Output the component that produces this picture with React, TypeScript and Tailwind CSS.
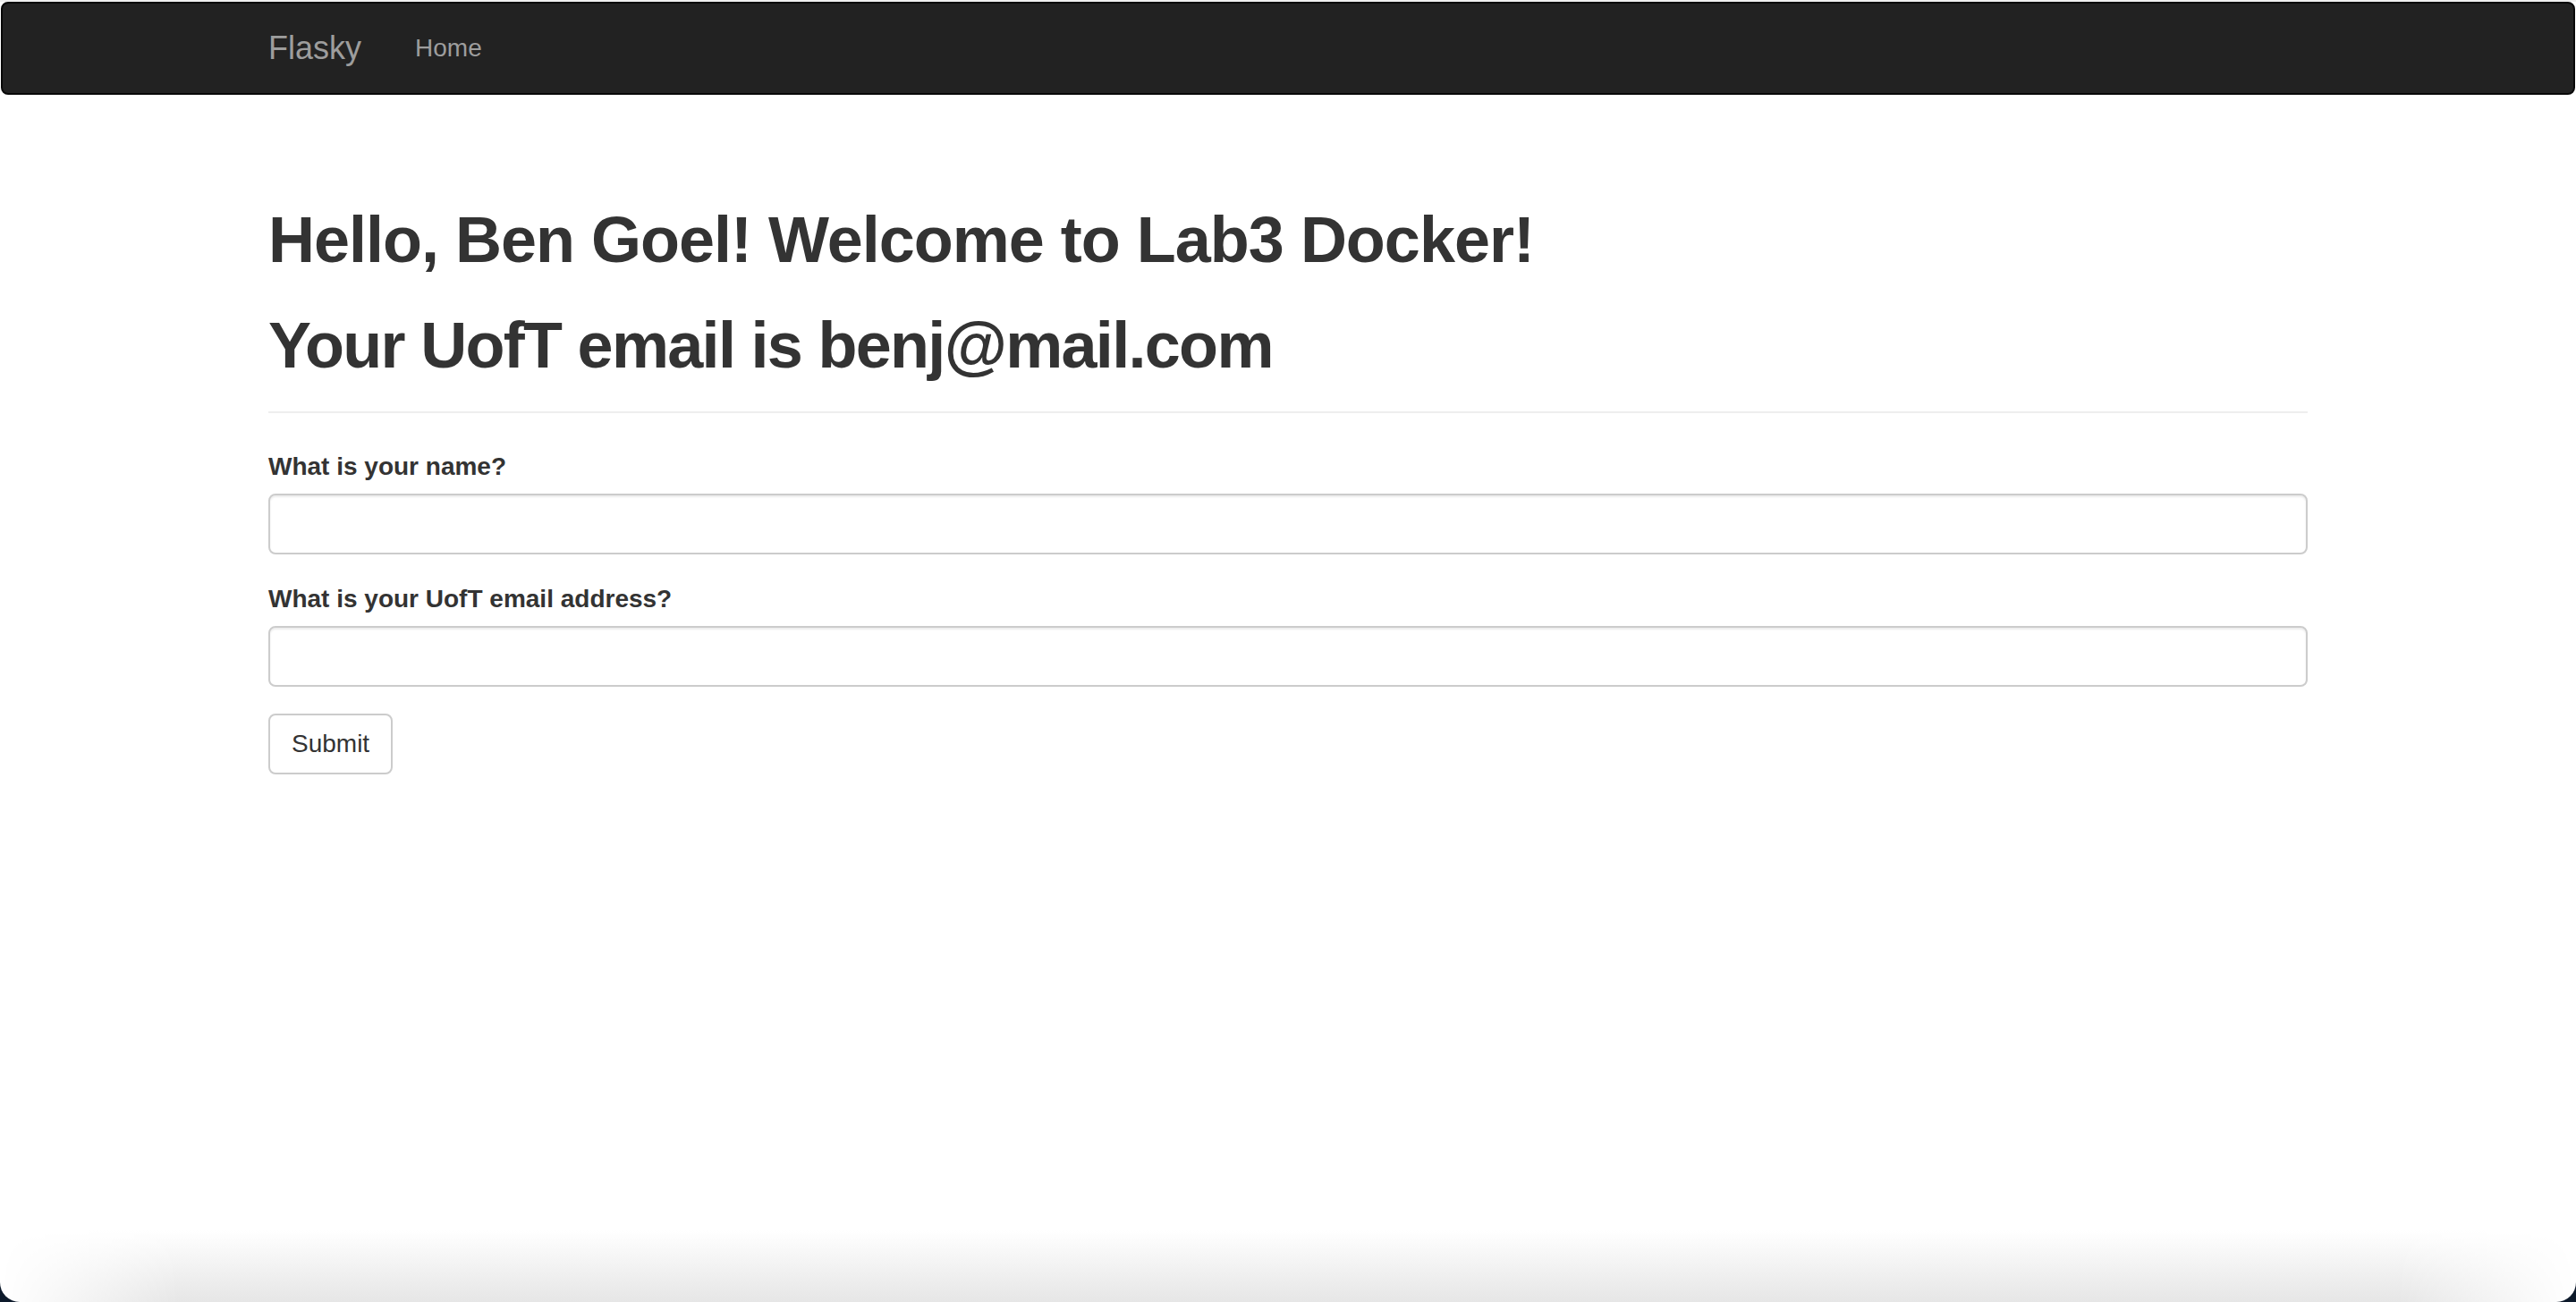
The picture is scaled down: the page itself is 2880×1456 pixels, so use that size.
import { useState } from "react";

const font = "font-['Liberation_Sans',Arial,sans-serif]";

function Navbar() {
  return (
    <div className="mx-px h-[104px] rounded-[8px] border-2 border-[#080808] bg-[#222]">
      <div className="mx-auto flex w-[2340px] px-[30px]">
        <a className="-ml-[30px] px-[30px] py-[30px] text-[36px] leading-[40px] text-[#9d9d9d]">
          Flasky
        </a>
        <ul className="flex">
          <li>
            <a className="block px-[30px] py-[30px] text-[28px] leading-[40px] text-[#9d9d9d]">
              Home
            </a>
          </li>
        </ul>
      </div>
    </div>
  );
}

function Field({ label, value, onChange }: { label: string; value: string; onChange: (v: string) => void }) {
  return (
    <div className="mb-[30px]">
      <label className="mb-[10px] block text-[28px] font-bold leading-[40px] text-[#333]">{label}</label>
      <input
        value={value}
        onChange={(e) => onChange(e.target.value)}
        className="block h-[68px] w-full rounded-[8px] border-2 border-[#ccc] bg-white px-[24px] text-[28px] text-[#555] shadow-[inset_0_2px_2px_rgba(0,0,0,0.075)] outline-none"
      />
    </div>
  );
}

export default function App() {
  const [name, setName] = useState("");
  const [email, setEmail] = useState("");

  return (
    <div className={`h-[1456px] bg-[#0d1a2b] ${font}`}>
      <div className="flex h-full flex-col overflow-hidden rounded-b-[22px] bg-white">
        <div className="h-[2px] bg-[#efefef]" />
        <Navbar />

        <div className="mx-auto w-[2340px] flex-1 px-[30px]">
          <div className="mt-[122px] border-b-2 border-[#eee] pb-[34px]">
            <h1 className="text-[72px] font-bold leading-[80px] tracking-[-1px] text-[#333]">
              Hello, Ben Goel! Welcome to Lab3 Docker!
            </h1>
            <h1 className="mt-[38px] text-[72px] font-bold leading-[80px] tracking-[-1.7px] text-[#333]">
              Your UofT email is benj@mail.com
            </h1>
          </div>

          <form className="mt-[40px]" onSubmit={(e) => e.preventDefault()}>
            <Field label="What is your name?" value={name} onChange={setName} />
            <Field label="What is your UofT email address?" value={email} onChange={setEmail} />
            <button
              type="submit"
              className="h-[68px] rounded-[8px] border-2 border-[#ccc] bg-white px-[24px] text-[28px] leading-[40px] text-[#333]"
            >
              Submit
            </button>
          </form>
        </div>

        <div className="h-[80px] bg-gradient-to-b from-white to-[#e6e6e6] [mask-image:linear-gradient(to_right,transparent,black_200px,black_calc(100%-200px),transparent)]" />
      </div>
    </div>
  );
}
